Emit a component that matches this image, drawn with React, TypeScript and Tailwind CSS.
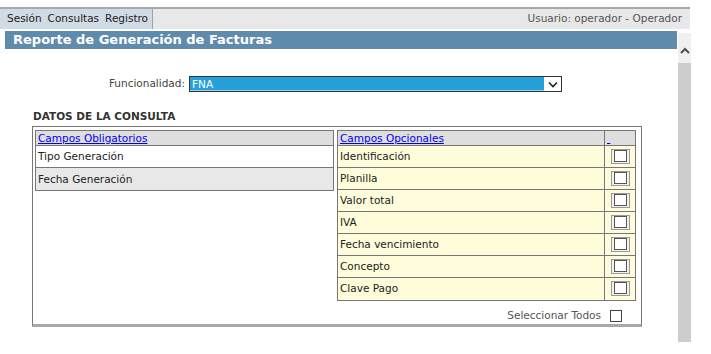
import React from 'react';

const opcionales = [
  'Identificación',
  'Planilla',
  'Valor total',
  'IVA',
  'Fecha vencimiento',
  'Concepto',
  'Clave Pago',
];

function CheckGlyph() {
  return (
    <svg width="19" height="15" viewBox="0 0 19 15">
      <rect x="0.5" y="0.5" width="18" height="14" fill="#f2f2f2" stroke="#9a9a9a" />
      <rect x="3.5" y="1.5" width="12" height="11" fill="#fff" stroke="#555" />
    </svg>
  );
}

export default function App() {
  return (
    <div
      className="w-[711px] h-[354px] bg-white text-[10.5px] text-[#222] overflow-hidden"
      style={{ fontFamily: '"DejaVu Sans", Verdana, sans-serif' }}
    >
      {/* Menu bar */}
      <div className="pt-[7px]">
        <div className="w-[690px] h-[22px] border-t-2 border-[#a8a8a8] bg-[#e8e8e8] flex items-center">
          <div className="h-full w-[153px] bg-[#d1dbe5] border-r border-[#9aa4ae] flex items-center pl-[7px] gap-[6px] text-[#222]">
            <span>Sesión</span>
            <span>Consultas</span>
            <span>Registro</span>
          </div>
          <div className="flex-1 text-right pr-[8px] text-[#555]">Usuario: operador - Operador</div>
        </div>
      </div>

      <div className="flex mt-[2px]">
        {/* Main */}
        <div className="w-[672px] ml-[5px]">
          <div className="h-[18px] bg-[#5f8cad] text-white font-bold text-[13px] leading-[18px] pl-[8px]">
            Reporte de Generación de Facturas
          </div>

          <div className="flex items-center mt-[27px]">
            <span className="w-[184px] text-right pr-[4px] text-[#444]">Funcionalidad:</span>
            <div className="w-[373px] h-[16px] border border-[#333] flex bg-white">
              <div className="flex-1 bg-[#26a0da] text-white leading-[14px] pl-[2px] border-b border-[#9fd3ef]">FNA</div>
              <div className="w-[17px] flex items-center justify-center">
                <svg width="10" height="7" viewBox="0 0 10 7">
                  <path d="M1 1.5 L5 5.5 L9 1.5" fill="none" stroke="#222" strokeWidth="1.6" />
                </svg>
              </div>
            </div>
          </div>

          <div className="mt-[17px] ml-[28px] font-bold text-[#333]">DATOS DE LA CONSULTA</div>

          <div className="ml-[27px] mt-[1px] w-[610px] h-[201px] border border-[#777] border-b-[3px] border-b-[#a8a8a8] px-[2px] pt-[3px]">
            <div className="flex gap-[3px] items-start">
              {/* Obligatorios */}
              <div className="w-[299px] border border-[#777]">
                <div className="h-[15px] bg-[#dedede] border-b border-[#777] leading-[14px] pl-[2px]">
                  <span className="text-[#0000ee] underline">Campos Obligatorios</span>
                </div>
                <div className="h-[22px] bg-white border-b border-[#777] leading-[21px] pl-[2px]">Tipo Generación</div>
                <div className="h-[22px] bg-[#e8e8e8] leading-[22px] pl-[2px]">Fecha Generación</div>
              </div>

              {/* Opcionales */}
              <div className="w-[299px] border border-[#777]">
                <div className="flex h-[15px] bg-[#dedede] border-b border-[#777] leading-[14px]">
                  <div className="flex-1 pl-[2px] border-r border-[#777]">
                    <span className="text-[#0000ee] underline">Campos Opcionales</span>
                  </div>
                  <div className="w-[30px] pl-[2px]">
                    <span className="text-[#0000ee] underline">&nbsp;</span>
                  </div>
                </div>
                {opcionales.map((c, i) => (
                  <div
                    key={c}
                    className={`flex h-[22px] bg-[#fffcdb] ${i < opcionales.length - 1 ? 'border-b border-[#777]' : ''}`}
                  >
                    <div className="flex-1 pl-[2px] leading-[21px] border-r border-[#777]">{c}</div>
                    <div className="w-[30px] flex items-center justify-center">
                      <CheckGlyph />
                    </div>
                  </div>
                ))}
              </div>
            </div>

            <div className="flex justify-end items-center mt-[7px] pr-[17px] text-[#555]">
              <span>Seleccionar Todos</span>
              <span className="ml-[9px] w-[12px] h-[12px] border border-[#444] bg-white" />
            </div>
          </div>
        </div>

        {/* Scrollbar */}
        <div className="w-[13px] ml-[1px] mt-[2px] h-[309px] bg-[#f0f0f0] flex flex-col">
          <div className="h-[30px] pt-[14px] flex justify-center">
            <svg width="10" height="7" viewBox="0 0 10 7">
              <path d="M1 6 L5 2 L9 6" fill="none" stroke="#505050" strokeWidth="2" />
            </svg>
          </div>
          <div className="flex-1 bg-[#cdcdcd]" />
        </div>
      </div>
    </div>
  );
}
